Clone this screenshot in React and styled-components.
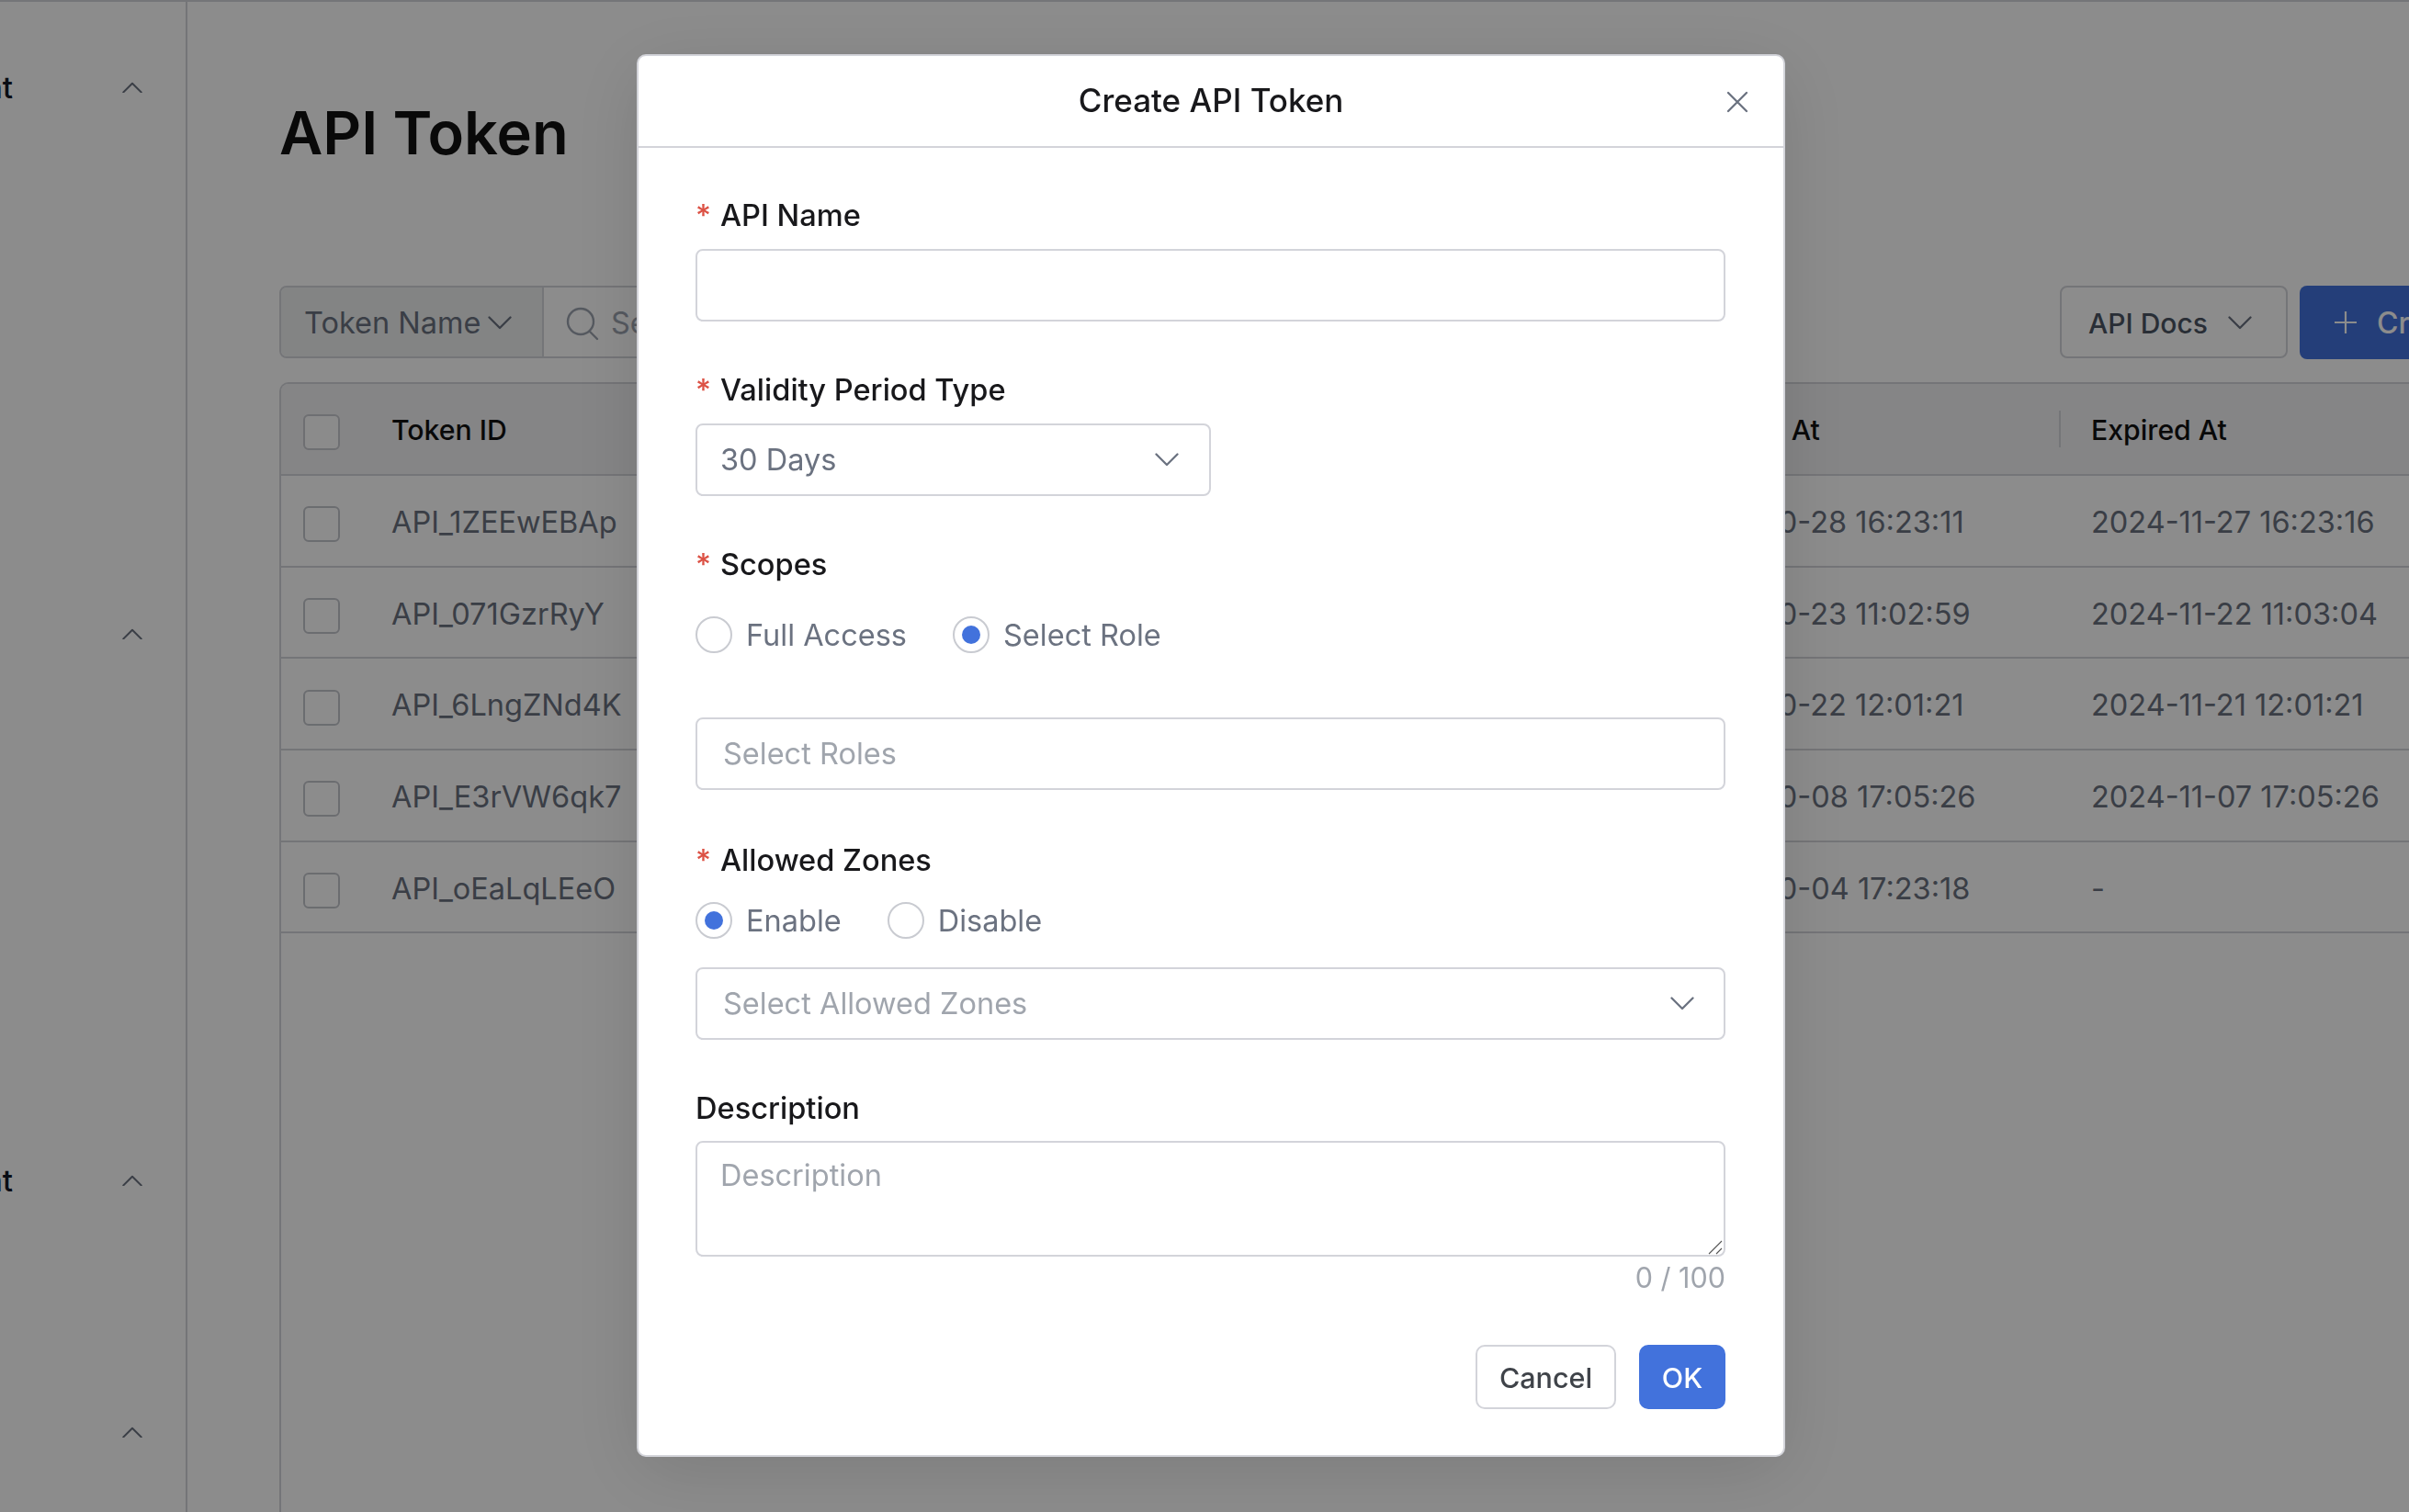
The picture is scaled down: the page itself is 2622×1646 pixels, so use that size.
import React from "react";
import styled, { createGlobalStyle } from "styled-components";

const Global = createGlobalStyle`
  html, body { margin: 0; padding: 0; width: 100%; height: 100%; overflow: hidden; background: #fff; }
  * { box-sizing: border-box; }
  body { font-family: Inter, "Liberation Sans", sans-serif; }
`;

const Page = styled.div`
  display: flex;
  width: 2622px;
  height: 1646px;
  overflow: hidden;
  border-top: 2px solid #d4d5da;
`;
const Sidebar = styled.aside`
  width: 204px;
  flex: none;
  border-right: 2px solid #d4d5da;
  overflow: hidden;
  padding-top: 73px;
`;
const SideRow = styled.div`
  height: 40px;
  margin-bottom: ${(p) => p.$gap}px;
  display: flex;
  align-items: center;
  justify-content: space-between;
  padding-right: 47px;
`;
const SideLabel = styled.span`
  font-size: 33px;
  font-weight: 500;
  color: #111827;
  width: 14px;
  display: flex;
  justify-content: flex-end;
  overflow: hidden;
  white-space: nowrap;
`;
const Main = styled.main`
  flex: 1;
  min-width: 0;
  overflow: hidden;
  padding: 0 0 0 100px;
`;
const Inner = styled.div`
  width: 2600px;
  display: flex;
  flex-direction: column;
  height: 100%;
`;
const Title = styled.h1`
  margin: 108px 0 0;
  height: 70px;
  line-height: 70px;
  font-size: 65px;
  font-weight: 600;
  color: #111;
`;
const Toolbar = styled.div`
  margin-top: 131px;
  display: flex;
  align-items: flex-start;
  height: 80px;
`;
const FilterGroup = styled.div`
  display: flex;
  height: 79px;
  width: 900px;
  border: 2px solid #d4d5da;
  border-radius: 8px;
  overflow: hidden;
`;
const FilterSelect = styled.div`
  width: 286px;
  display: flex;
  align-items: center;
  gap: 8px;
  padding: 2px 0 0 25px;
  background: #eef1f1;
  border-right: 2px solid #d4d5da;
  font-size: 32.5px;
  color: #6b7280;
`;
const SearchBox = styled.div`
  display: flex;
  align-items: center;
  gap: 12px;
  padding: 2px 0 0 23px;
  font-size: 32.5px;
  color: #9ca3af;
`;
const ToolActions = styled.div`
  margin-left: 1038px;
  display: flex;
  gap: 13px;
`;
const DocsButton = styled.div`
  width: 248px;
  height: 79px;
  padding: 2px 0 0 29px;
  display: flex;
  align-items: center;
  gap: 22px;
  border: 2px solid #d4d5da;
  border-radius: 8px;
  font-size: 30px;
  font-weight: 500;
  color: #4b5563;
`;
const CreateButton = styled.div`
  height: 80px;
  padding: 0 36px 0 38px;
  display: flex;
  align-items: center;
  gap: 22px;
  border-radius: 8px;
  background: #4272dc;
  color: #fff;
  font-size: 32px;
  font-weight: 500;
  white-space: nowrap;
`;
const Table = styled.div`
  margin-top: 25px;
  flex: 1;
  border-left: 2px solid #d4d5da;
  border-top: 2px solid #d4d5da;
  border-top-left-radius: 10px;
`;
const Row = styled.div`
  display: grid;
  grid-template-columns: 85px 709px 692px 449px 1fr;
  align-items: center;
  height: ${(p) => (p.$head ? "100px" : "99.7px")};
  border-bottom: 2px solid #d4d5da;
  background: ${(p) => (p.$head ? "#f2f2f4" : "#fff")};
  border-top-left-radius: ${(p) => (p.$head ? "8px" : "0")};
`;
const CheckCell = styled.div`
  padding-left: 24px;
  display: flex;
  align-items: center;
`;
const Check = styled.span`
  display: block;
  width: 40px;
  height: 39px;
  border: 2px solid #c4c6cc;
  border-radius: 6px;
  background: #fff;
  margin-top: ${(p) => (p.$head ? 6 : 8)}px;
  opacity: ${(p) => (p.$head ? 0.9 : 1)};
`;
const Cell = styled.div`
  padding-left: ${(p) => (p.$sep ? 33 : 35)}px;
  font-size: ${(p) => (p.$head ? 30.2 : 32.5)}px;
  white-space: nowrap;
  height: 40px;
  line-height: ${(p) => (p.$head ? 42 : 44)}px;
  color: ${(p) => (p.$head ? "#111" : "#6b7280")};
  font-weight: ${(p) => (p.$head ? 500 : 400)};
  border-left: ${(p) => (p.$sep ? "2px solid #d4d5da" : "0")};
`;
const Overlay = styled.div`
  position: fixed;
  inset: 0;
  background: rgba(0, 0, 0, 0.45);
`;
const Modal = styled.div`
  position: absolute;
  left: 693px;
  top: 59px;
  width: 1250px;
  height: 1527px;
  background: #fff;
  border: 2px solid #d3d4da;
  border-radius: 10px;
  box-shadow: 0 16px 80px rgba(0, 0, 0, 0.12);
`;
const ModalHead = styled.header`
  height: 100px;
  display: flex;
  align-items: center;
  justify-content: center;
  border-bottom: 2px solid #d3d4da;
  position: relative;
`;
const ModalTitle = styled.h2`
  margin: 0 0 2px;
  font-size: 35px;
  font-weight: 500;
  color: #18181b;
`;
const CloseIcon = styled.svg`
  position: absolute;
  right: 38px;
  top: 38px;
  width: 24px;
  height: 24px;
`;
const Form = styled.form`
  padding: 53px 63px 0 62px;
  display: flex;
  flex-direction: column;
`;
const Label = styled.label`
  height: 40px;
  line-height: 40px;
  margin-top: ${(p) => p.$top || 0}px;
  display: flex;
  font-size: 32.6px;
  font-weight: 500;
  color: #18181b;
`;
const Star = styled.span`
  width: 27px;
  color: #dc5245;
  font-weight: 500;
`;
const TextInput = styled.input`
  display: block;
  width: 1121px;
  height: 79px;
  margin-top: ${(p) => p.$top || 0}px;
  padding: 0 28px;
  border: 2px solid #d3d4da;
  border-radius: 8px;
  font-family: inherit;
  font-size: 32.5px;
  color: #374151;
  outline: none;
  &::placeholder { color: #a0a5ad; opacity: 1; }
`;
const SelectBox = styled.div`
  width: ${(p) => p.$w}px;
  height: 79px;
  margin-top: ${(p) => p.$top || 0}px;
  padding: 0 ${(p) => p.$right}px 0 ${(p) => p.$pad}px;
  border: 2px solid #d3d4da;
  border-radius: 8px;
  display: flex;
  align-items: center;
  justify-content: space-between;
  font-size: 32.5px;
  color: ${(p) => (p.$ph ? "#a0a5ad" : "#6b7280")};
`;
const RadioRow = styled.div`
  display: flex;
  height: 40px;
  margin-top: ${(p) => p.$top}px;
`;
const RadioItem = styled.span`
  display: flex;
  align-items: center;
  margin-right: ${(p) => p.$gap}px;
  font-size: 32.5px;
  color: #6b7280;
`;
const RadioMark = styled.span`
  width: 40px;
  height: 40px;
  margin-right: 15px;
  flex: none;
  border-radius: 50%;
  border: 2px solid #c9cbd1;
  display: flex;
  align-items: center;
  justify-content: center;
  &::after {
    content: "";
    display: ${(p) => (p.$on ? "block" : "none")};
    width: 20px;
    height: 20px;
    border-radius: 50%;
    background: #4272dc;
  }
`;
const AreaWrap = styled.div`
  position: relative;
  width: 1121px;
  margin-top: 16px;
`;
const TextArea = styled.textarea`
  display: block;
  width: 100%;
  height: 126px;
  padding: 16px 25px;
  border: 2px solid #d3d4da;
  border-radius: 8px;
  font-family: inherit;
  font-size: 32.5px;
  line-height: 40px;
  outline: none;
  resize: none;
  &::placeholder { color: #a0a5ad; opacity: 1; }
`;
const Grip = styled.svg`
  position: absolute;
  right: 3px;
  bottom: 2px;
  width: 16px;
  height: 16px;
`;
const Counter = styled.div`
  width: 1121px;
  height: 36px;
  margin-top: 5px;
  line-height: 36px;
  text-align: right;
  font-size: 30.5px;
  color: #a0a5ad;
`;
const Footer = styled.footer`
  width: 1121px;
  margin-top: 55px;
  display: flex;
  justify-content: flex-end;
  gap: 25px;
`;
const Btn = styled.button`
  height: 70px;
  width: ${(p) => p.$w}px;
  padding: 0;
  border-radius: 10px;
  font-family: inherit;
  font-size: 30.5px;
  font-weight: 500;
  border: ${(p) => (p.$primary ? "0" : "2px solid #d3d4da")};
  background: ${(p) => (p.$primary ? "#4272dc" : "#fff")};
  color: ${(p) => (p.$primary ? "#fff" : "#3f4349")};
`;
const Svg = styled.svg`
  flex: none;
  display: block;
`;

const Chevron = ({ color = "#6b7280", w = 26, up }) => (
  <Svg width={w} height={w * 0.58} viewBox="0 0 26 15" fill="none">
    <path
      d={up ? "M1.5 13.5 13 2l11.5 11.5" : "M1.5 1.5 13 13 24.5 1.5"}
      stroke={color}
      strokeWidth="2.3"
      strokeLinecap="round"
      strokeLinejoin="round"
    />
  </Svg>
);

const SIDE = [
  { gap: 555, label: "Management" },
  { gap: 555, label: "" },
  { gap: 234, label: "Management" },
  { gap: 0, label: "" },
];

const ROWS = [
  ["API_1ZEEwEBAp", "Default", "2024-10-28 16:23:11", "2024-11-27 16:23:16"],
  ["API_071GzrRyY", "Default", "2024-10-23 11:02:59", "2024-11-22 11:03:04"],
  ["API_6LngZNd4K", "Default", "2024-10-22 12:01:21", "2024-11-21 12:01:21"],
  ["API_E3rVW6qk7", "Default", "2024-10-08 17:05:26", "2024-11-07 17:05:26"],
  ["API_oEaLqLEeO", "Default", "2024-10-04 17:23:18", "-"],
];

export default function App() {
  return (
    <>
      <Global />
      <Page>
        <Sidebar>
          {SIDE.map((s, i) => (
            <SideRow key={i} $gap={s.gap}>
              <SideLabel>{s.label}</SideLabel>
              <Chevron up w={22} color="#6b7280" />
            </SideRow>
          ))}
        </Sidebar>
        <Main>
          <Inner>
            <Title>API Token</Title>
            <Toolbar>
              <FilterGroup>
                <FilterSelect>
                  Token Name <Chevron w={26} />
                </FilterSelect>
                <SearchBox>
                  <Svg width="38" height="40" viewBox="0 0 38 40" fill="none" stroke="#9ca3af" strokeWidth="2.4" strokeLinecap="round">
                    <circle cx="17" cy="18" r="14" />
                    <path d="M27 29l8 8" />
                  </Svg>
                  Search
                </SearchBox>
              </FilterGroup>
              <ToolActions>
                <DocsButton>
                  API Docs <Chevron w={26} />
                </DocsButton>
                <CreateButton>
                  <Svg width="24" height="24" viewBox="0 0 24 24" fill="none" stroke="#fff" strokeWidth="2.2">
                    <path d="M12 0v24M0 12h24" />
                  </Svg>
                  Create API Token
                </CreateButton>
              </ToolActions>
            </Toolbar>
            <Table>
              <Row $head>
                <CheckCell><Check $head /></CheckCell>
                <Cell $head>Token ID</Cell>
                <Cell $head>Token Name</Cell>
                <Cell $head>Created At</Cell>
                <Cell $head $sep>Expired At</Cell>
              </Row>
              {ROWS.map((r) => (
                <Row key={r[0]}>
                  <CheckCell><Check /></CheckCell>
                  {r.map((c, i) => (
                    <Cell key={i}>{c}</Cell>
                  ))}
                </Row>
              ))}
            </Table>
          </Inner>
        </Main>
      </Page>
      <Overlay>
        <Modal>
          <ModalHead>
            <ModalTitle>Create API Token</ModalTitle>
            <CloseIcon viewBox="0 0 24 24" fill="none" stroke="#6b7280" strokeWidth="2.3" strokeLinecap="round">
              <path d="M2 2l20 20M22 2L2 22" />
            </CloseIcon>
          </ModalHead>
          <Form>
            <Label><Star>*</Star>API Name</Label>
            <TextInput $top={17} />
            <Label $top={54}><Star>*</Star>Validity Period Type</Label>
            <SelectBox $w={561} $pad={25} $right={33} $top={17}>
              30 Days <Chevron />
            </SelectBox>
            <Label $top={54}><Star>*</Star>Scopes</Label>
            <RadioRow $top={37}>
              <RadioItem $gap={50}><RadioMark />Full Access</RadioItem>
              <RadioItem $gap={0}><RadioMark $on />Select Role</RadioItem>
            </RadioRow>
            <TextInput $top={70} placeholder="Select Roles" />
            <Label $top={56}><Star>*</Star>Allowed Zones</Label>
            <RadioRow $top={26}>
              <RadioItem $gap={50}><RadioMark $on />Enable</RadioItem>
              <RadioItem $gap={0}><RadioMark />Disable</RadioItem>
            </RadioRow>
            <SelectBox $w={1121} $pad={28} $right={32} $ph $top={31}>
              Select Allowed Zones <Chevron />
            </SelectBox>
            <Label $top={54}>Description</Label>
            <AreaWrap>
              <TextArea placeholder="Description" />
              <Grip viewBox="0 0 16 16" fill="none" stroke="#555" strokeWidth="1.1">
                <path d="M1 15 15 1M9 15l6-6" />
              </Grip>
            </AreaWrap>
            <Counter>0 / 100</Counter>
            <Footer>
              <Btn type="button" $w={153}>Cancel</Btn>
              <Btn type="button" $w={94} $primary>OK</Btn>
            </Footer>
          </Form>
        </Modal>
      </Overlay>
    </>
  );
}
